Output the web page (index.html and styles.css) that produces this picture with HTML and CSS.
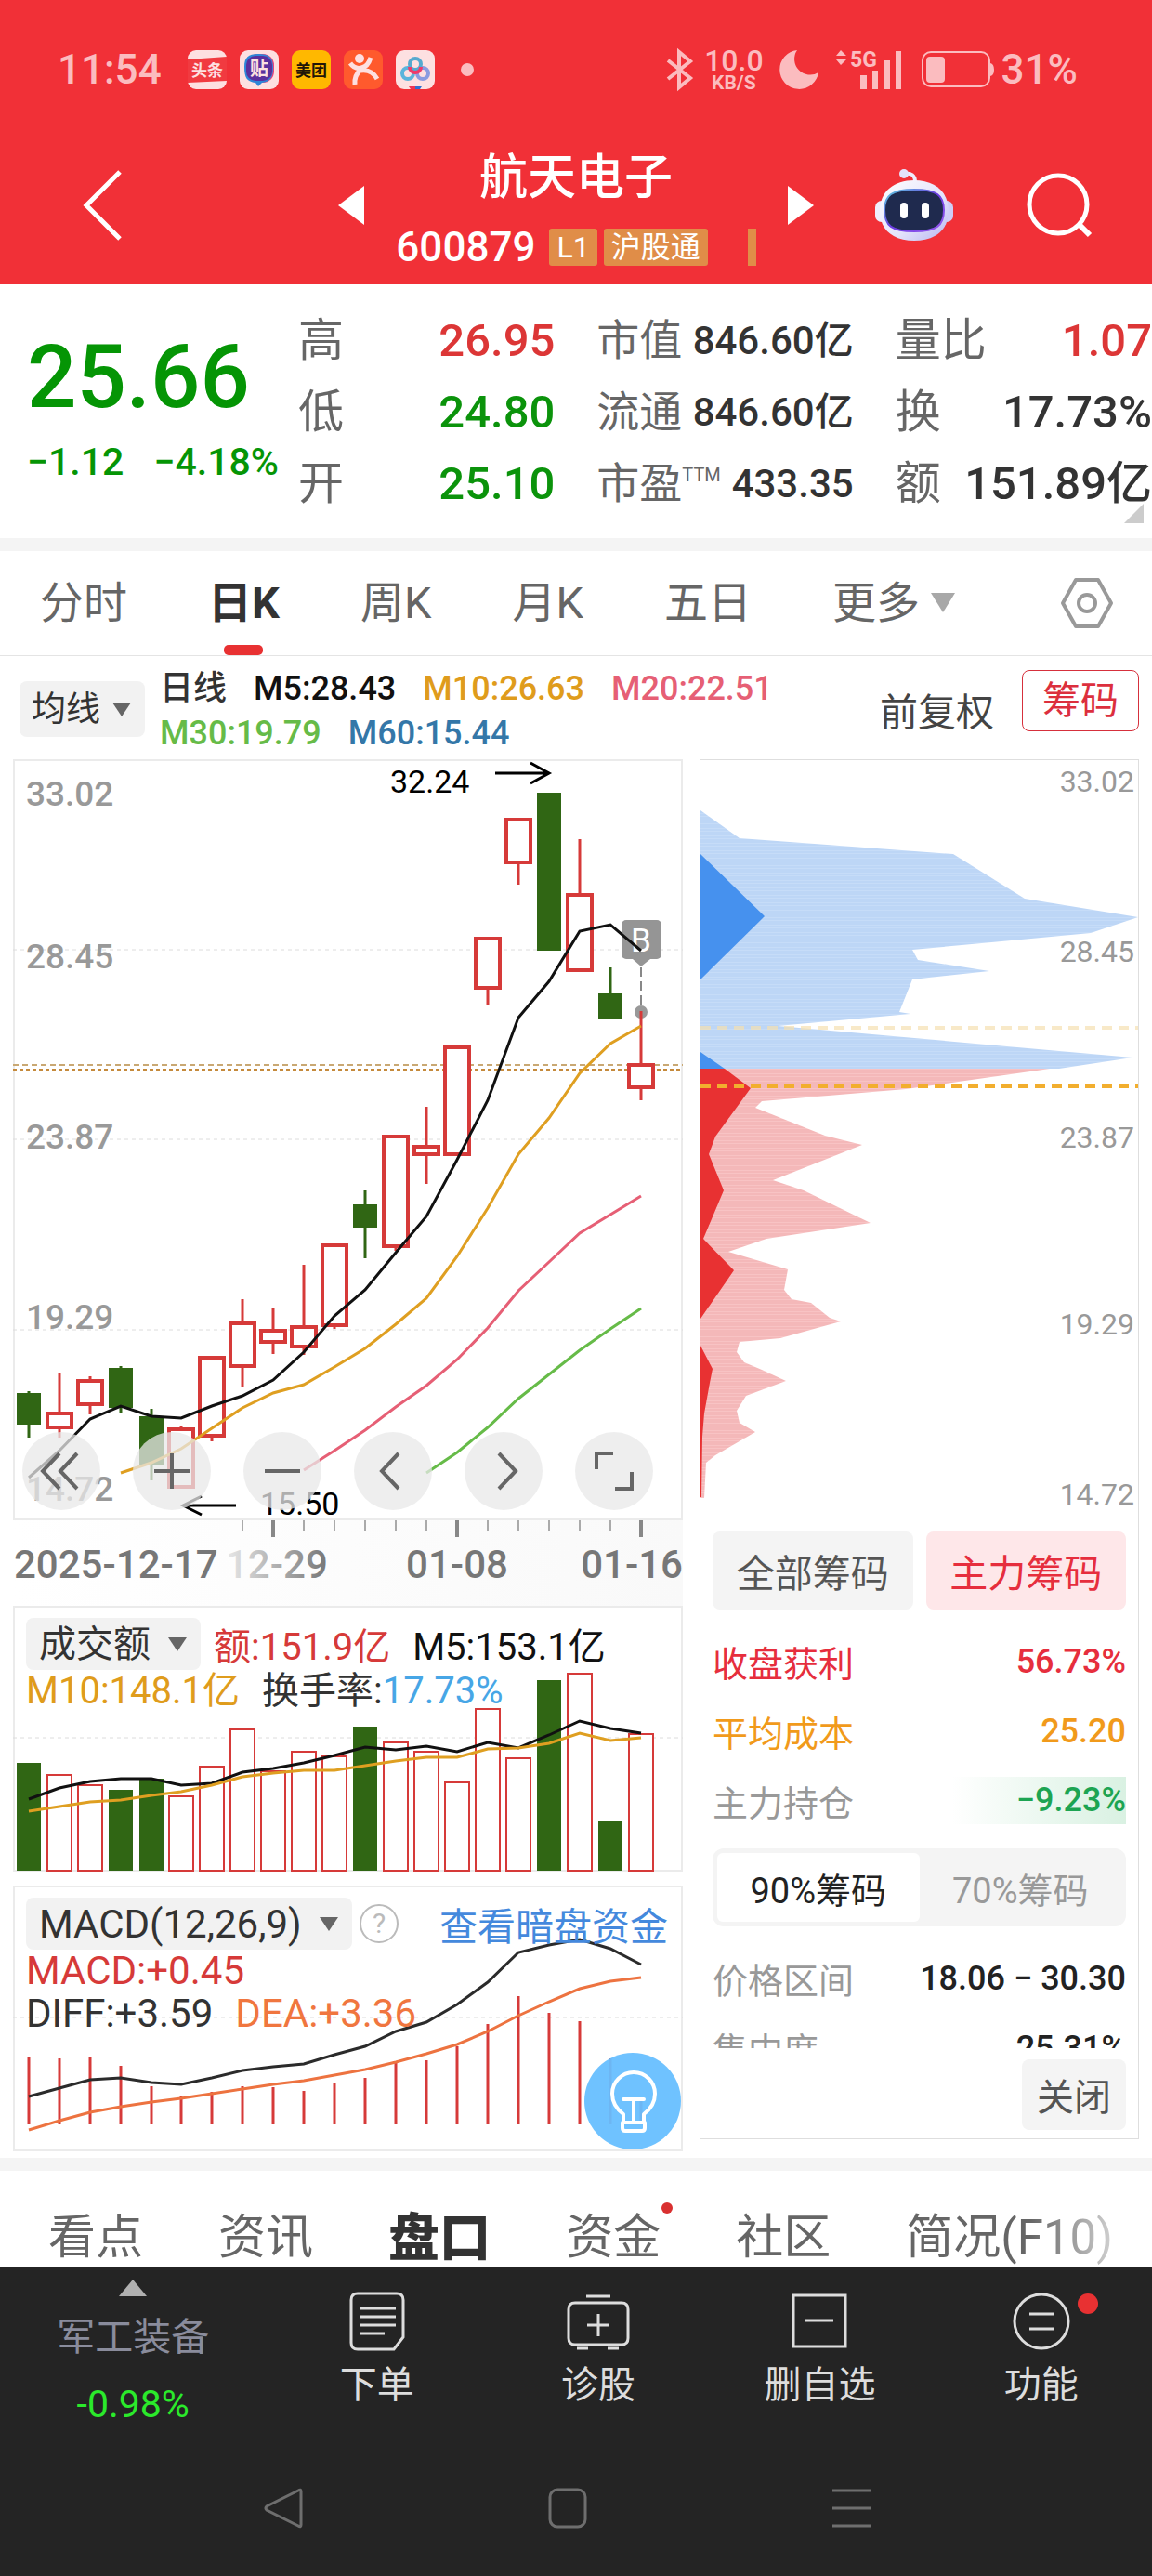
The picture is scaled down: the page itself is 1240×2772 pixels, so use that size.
FILE: index.html
```html
<!DOCTYPE html>
<html lang="zh-CN">
<head>
    <meta charset="UTF-8">
    <meta name="viewport" content="width=device-width, initial-scale=1.0">
    <title>航天电子 600879</title>
    <link rel="stylesheet" href="styles.css">
</head>
<body>
    <header class="header">
        <div class="status-bar">
            <span class="clock">11:54</span>
            <div class="app-icons">
                <svg width="42" height="42" viewBox="0 0 42 42">
                    <rect width="42" height="42" rx="9" fill="#fde0e1"/>
                    <path d="M0 10L42 7V33L0 35Z" fill="#f13a40"/>
                    <text x="21" y="28" class="app-text" font-size="17" fill="#fde0e1">头条</text>
                </svg>
                <svg width="42" height="42" viewBox="0 0 42 42">
                    <rect width="42" height="42" rx="9" fill="#fde0e1"/>
                    <rect x="7" y="4" width="30" height="31" rx="12" fill="#e9407c"/>
                    <path d="M5 18C5 8 9 4 20 4C32 4 36 8 36 19C36 30 32 34 24 35L20 39L17 35C8 34 5 30 5 18Z" fill="#2f86d8"/>
                    <rect x="7" y="6" width="28" height="27" rx="10" fill="#5b2f9d"/>
                    <text x="21" y="27" class="app-text" font-size="20" fill="#fde0e1">贴</text>
                </svg>
                <svg width="42" height="42" viewBox="0 0 42 42">
                    <rect width="42" height="42" rx="9" fill="#ffb800"/>
                    <text x="21" y="28" class="app-text" font-size="17" fill="#221608">美团</text>
                </svg>
                <svg width="42" height="42" viewBox="0 0 42 42">
                    <rect width="42" height="42" rx="9" fill="#ff5a2d"/>
                    <circle cx="17" cy="9" r="5" fill="#fde0e1"/>
                    <path d="M7 14Q12 21 19 19Q26 18 29 8M19 20Q11 27 12 37M18 22Q30 20 36 31" fill="none" stroke="#fde0e1" stroke-width="5"/>
                </svg>
                <svg width="42" height="42" viewBox="0 0 42 42">
                    <rect width="42" height="42" rx="9" fill="#fde0e1"/>
                    <circle cx="13" cy="25" r="6" fill="none" stroke="#5cb4dc" stroke-width="4"/>
                    <circle cx="29" cy="25" r="6" fill="none" stroke="#8a9be0" stroke-width="4"/>
                    <circle cx="21" cy="15" r="6" fill="none" stroke="#56a9cf" stroke-width="4"/>
                    <path d="M15 18A6 6 0 0 0 27 18" fill="none" stroke="#ef3b6a" stroke-width="4"/>
                    <path d="M14 39H21V42H16Z" fill="#ee3553"/>
                    <path d="M21 39H28L26 42H21Z" fill="#2f6fd0"/>
                </svg>
            </div>
            <span class="dot"></span>
            <div class="status-right">
                <svg width="30" height="44" viewBox="0 0 30 44">
                    <path d="M3 12L27 31L15 41V3L27 13L3 32" fill="none" stroke="#fbbcbf" stroke-width="4"/>
                </svg>
                <div class="net-speed"><b>10.0</b><span>KB/S</span></div>
                <svg width="44" height="44" viewBox="0 0 44 44">
                    <path d="M20 1A21 21 0 1 0 43 25A17 17 0 0 1 20 1Z" fill="#fbbcbf"/>
                </svg>
                <svg class="signal" width="72" height="44" viewBox="0 0 72 44">
                    <path d="M0 7L5 1L11 7ZM0 11H11L5 17Z" fill="#fbbcbf"/>
                    <text x="15" y="19" font-size="23" font-weight="700" fill="#fbbcbf">5G</text>
                    <path d="M26 28H33V43H26ZM39 23H45V43H39ZM52 12H58V43H52ZM64 2H70V43H64Z" fill="#fbbcbf"/>
                </svg>
                <svg class="battery" width="78" height="40" viewBox="0 0 78 40">
                    <rect x="1" y="1" width="72" height="37" rx="9" fill="none" stroke="#fbbcbf" stroke-width="2"/>
                    <rect x="5" y="6" width="20" height="28" rx="4" fill="#fbbcbf"/>
                    <path d="M74 13Q78 14 78 20Q78 26 74 27Z" fill="#fbbcbf"/>
                </svg>
                <span class="percent">31%</span>
            </div>
        </div>
        <div class="title-bar">
            <button class="icon-btn back" aria-label="返回">
                <svg width="44" height="76" viewBox="0 0 44 76"><path d="M40 2L4 38L40 74" fill="none" stroke="#fff" stroke-width="5"/></svg>
            </button>
            <div class="stock-switch">
                <button class="icon-btn" aria-label="上一只">
                    <svg width="28" height="42" viewBox="0 0 28 42"><path d="M28 0V42L0 21Z" fill="#fff"/></svg>
                </button>
                <div class="stock">
                    <h1>航天电子</h1>
                    <div class="stock-code">
                        <span class="code">600879</span>
                        <span class="tag">L1</span>
                        <span class="tag tag-wide">沪股通</span>
                        <span class="tag-cut"></span>
                    </div>
                </div>
                <button class="icon-btn" aria-label="下一只">
                    <svg width="28" height="42" viewBox="0 0 28 42"><path d="M0 0V42L28 21Z" fill="#fff"/></svg>
                </button>
            </div>
            <div class="title-right">
                <button class="icon-btn" aria-label="智能助手">
                    <svg width="84" height="78" viewBox="0 0 84 78">
                        <defs>
                            <linearGradient id="head" x1="0" y1="0" x2="1" y2="1">
                                <stop offset="0" stop-color="#ffffff"/>
                                <stop offset="0.6" stop-color="#e3e2fb"/>
                                <stop offset="1" stop-color="#b7b4f0"/>
                            </linearGradient>
                            <linearGradient id="rim" x1="0" y1="0" x2="1" y2="1">
                                <stop offset="0" stop-color="#5fd0e0"/>
                                <stop offset="0.5" stop-color="#6a3be0"/>
                                <stop offset="1" stop-color="#9a5cf0"/>
                            </linearGradient>
                        </defs>
                        <path d="M31 5Q43 3 43 14" fill="none" stroke="#efedfd" stroke-width="4"/>
                        <circle cx="31" cy="5" r="5" fill="#e4e2fb"/>
                        <rect x="0" y="34" width="14" height="23" rx="7" fill="#efeefd"/>
                        <rect x="70" y="34" width="14" height="23" rx="7" fill="#cfcdf6"/>
                        <path d="M42 12C64 12 79 24 79 45C79 66 64 77 42 77C20 77 5 66 5 45C5 24 20 12 42 12Z" fill="url(#head)"/>
                        <path d="M42 22C66 22 74 28 74 44C74 61 66 67 42 67C18 67 10 61 10 44C10 28 18 22 42 22Z" fill="#1f2a4e" stroke="url(#rim)" stroke-width="2"/>
                        <rect x="27" y="36" width="8" height="17" rx="4" fill="#fff"/>
                        <rect x="50" y="36" width="8" height="17" rx="4" fill="#fff"/>
                    </svg>
                </button>
                <button class="icon-btn" aria-label="搜索">
                    <svg width="70" height="70" viewBox="0 0 70 70"><circle cx="33" cy="34" r="31" fill="none" stroke="#fff" stroke-width="5"/><path d="M55 55L67 67" stroke="#fff" stroke-width="6"/></svg>
                </button>
            </div>
        </div>
    </header>

    <section class="quote">
        <div class="price">
            <div class="price-now">25.66</div>
            <div class="price-change"><span>−1.12</span><span>−4.18%</span></div>
        </div>
        <div class="stats">
            <div class="stat"><span>高</span><b class="red">26.95</b></div>
            <div class="stat small"><span>市值</span><b>846.60亿</b></div>
            <div class="stat"><span>量比</span><b class="red">1.07</b></div>
            <div class="stat"><span>低</span><b class="green">24.80</b></div>
            <div class="stat small"><span>流通</span><b>846.60亿</b></div>
            <div class="stat"><span>换</span><b>17.73%</b></div>
            <div class="stat"><span>开</span><b class="green">25.10</b></div>
            <div class="stat small"><span>市盈<sup>TTM</sup></span><b>433.35</b></div>
            <div class="stat"><span>额</span><b>151.89亿</b></div>
        </div>
        <i class="corner"></i>
    </section>

    <nav class="period-tabs">
        <a href="#">分时</a>
        <a href="#" class="active">日K</a>
        <a href="#">周K</a>
        <a href="#">月K</a>
        <a href="#">五日</a>
        <a href="#" class="more">更多</a>
        <button class="icon-btn" aria-label="设置">
            <svg width="58" height="56" viewBox="0 0 58 56"><path d="M17 3H41L55 28L41 53H17L3 28Z" fill="none" stroke="#999" stroke-width="4" stroke-linejoin="round"/><circle cx="29" cy="28" r="9" fill="none" stroke="#999" stroke-width="4"/></svg>
        </button>
    </nav>

    <div class="indicator-row">
        <span class="drop"><select class="pick" aria-label="指标"><option>均线</option></select></span>
        <div class="ma-legend">
            <div><span class="c-dark">日线</span><span class="c-black">M5:28.43</span><span class="c-gold">M10:26.63</span><span class="c-pink">M20:22.51</span></div>
            <div><span class="c-lime">M30:19.79</span><span class="c-blue">M60:15.44</span></div>
        </div>
        <span class="adjust">前复权</span>
        <button class="chip-toggle">筹码</button>
    </div>

    <main class="charts">
        <div class="left">
            <div class="kline">
                <svg id="kline" viewBox="14 816 721 819"></svg>
                <div class="tools">
                    <button aria-label="最早"><svg viewBox="0 0 84 84"><path d="M40 23L22 42L40 61M59 23L41 42L59 61"/></svg></button>
                    <button aria-label="放大"><svg viewBox="0 0 84 84"><path d="M42 23V61M23 42H61"/></svg></button>
                    <button aria-label="缩小"><svg viewBox="0 0 84 84"><path d="M23 42H61"/></svg></button>
                    <button aria-label="左移"><svg viewBox="0 0 84 84"><path d="M48 23L30 42L48 61"/></svg></button>
                    <button aria-label="右移"><svg viewBox="0 0 84 84"><path d="M37 23L55 42L37 61"/></svg></button>
                    <button aria-label="全屏"><svg viewBox="0 0 84 84"><path d="M23 40V23H41M43 61H61V43"/></svg></button>
                </div>
            </div>
            <svg id="axis" class="axis" viewBox="14 1635 721 92"></svg>

            <div class="panel">
                <svg id="volume" viewBox="14 1727 721 286"></svg>
                <div class="legend">
                    <div class="legend-top">
                        <span class="drop"><select class="pick" aria-label="副图一"><option>成交额</option></select></span>
                        <span class="c-red">额:151.9亿</span><span class="c-black second">M5:153.1亿</span>
                    </div>
                    <div class="line"><span class="c-gold">M10:148.1亿</span><span class="c-dark second">换手率:<span class="c-sky">17.73%</span></span></div>
                </div>
            </div>

            <div class="panel">
                <svg id="macd" viewBox="14 2028 721 286"></svg>
                <div class="legend macd-legend">
                    <div class="legend-top">
                        <span class="drop"><select class="pick" aria-label="副图二"><option>MACD(12,26,9)</option></select></span>
                        <button class="help" aria-label="说明">?</button>
                        <a class="fund-link" href="#">查看暗盘资金</a>
                    </div>
                    <div class="line c-red">MACD:+0.45</div>
                    <div class="line"><span class="c-dark">DIFF:+3.59</span><span class="c-orange second">DEA:+3.36</span></div>
                </div>
                <button class="bulb" aria-label="提示">
                    <svg width="104" height="104" viewBox="0 0 104 104"><g fill="none" stroke="#fff" stroke-width="4" stroke-linecap="round" stroke-linejoin="round"><path d="M42 75V66Q30 57 30 44A22 22 0 0 1 76 44Q76 57 64 66V75M42 50H64M53 50V74M41 75H65V81Q65 84 62 84H44Q41 84 41 81Z"/></g></svg>
                </button>
            </div>
        </div>

        <aside class="chips">
            <svg class="profile" viewBox="754 817 471 815">
                <defs>
                    <pattern id="blueLines" width="8" height="8" patternUnits="userSpaceOnUse"><path d="M0 0H8V8H0Z" fill="#c6dcf8"/><path d="M0 1H8M0 4H8M0 7H8" stroke="#b4d1f4"/></pattern>
                    <pattern id="redLines" width="8" height="8" patternUnits="userSpaceOnUse"><path d="M0 0H8V8H0Z" fill="#f8c3c4"/><path d="M0 1H8M0 4H8M0 7H8" stroke="#f1adaf"/></pattern>
                </defs>
                <path fill="url(#blueLines)" d="M754 871L796 901L1026 918L1103 966L1225 986L1174 1003L982 1021L988 1032L1065 1044L982 1053L968 1088L980 1090L837 1103L860 1105L1219 1137L1140 1149H754Z"/>
                <path fill="url(#redLines)" d="M754 1149H1130L975 1171L820 1184L813 1191L888 1221L928 1231L832 1269L865 1280L937 1315L825 1332L784 1346L848 1365L844 1387L852 1397L873 1401L893 1417L905 1421L840 1439L796 1443L793 1454L801 1465L820 1473L846 1485L803 1501L793 1517L796 1530L813 1540L770 1565L760 1573L758 1611H754Z"/>
                <path fill="#4691ee" d="M754 918L823 985L754 1053ZM754 1131L780 1149H754Z"/>
                <path fill="#e83132" d="M754 1149H780L808 1170L770 1222L763 1241L779 1280L757 1332L790 1366L754 1418ZM754 1447L767 1472L764 1487L758 1520L756 1545L755 1610H754Z"/>
                <path d="M754 1105H1225" stroke="#f5dfb0" stroke-opacity="0.7" stroke-width="4" stroke-dasharray="11 7"/>
                <path d="M754 1168H1225" stroke="#f2ae2e" stroke-width="4" stroke-dasharray="11 7"/>
                <g class="profile-label">
                    <text x="1221" y="851">33.02</text>
                    <text x="1221" y="1034">28.45</text>
                    <text x="1221" y="1234">23.87</text>
                    <text x="1221" y="1435">19.29</text>
                    <text x="1221" y="1618">14.72</text>
                </g>
            </svg>
            <div class="chip-info">
                <div class="chip-kind">
                    <button>全部筹码</button>
                    <button class="on">主力筹码</button>
                </div>
                <div class="rows">
                    <div class="row c-crimson"><span>收盘获利</span><b>56.73%</b></div>
                    <div class="row c-amber"><span>平均成本</span><b>25.20</b></div>
                    <div class="row"><span>主力持仓</span><b class="hold">−9.23%</b></div>
                </div>
                <div class="segment">
                    <button class="on">90%筹码</button>
                    <button>70%筹码</button>
                </div>
                <div class="rows scroll">
                    <div class="row"><span>价格区间</span><b>18.06 − 30.30</b></div>
                    <div class="row"><span>集中度</span><b>25.31%</b></div>
                </div>
                <button class="close">关闭</button>
            </div>
        </aside>
    </main>

    <nav class="info-tabs">
        <a href="#">看点</a>
        <a href="#">资讯</a>
        <a href="#" class="active">盘口</a>
        <a href="#" class="new">资金</a>
        <a href="#">社区</a>
        <a href="#" class="fade">简况(F10)</a>
    </nav>

    <footer class="footer">
        <div class="toolbar">
            <a class="sector" href="#">
                <i class="up"></i>
                <span>军工装备</span>
                <span class="pct">-0.98%</span>
            </a>
            <button>
                <svg width="68" height="66" viewBox="0 0 68 66"><path d="M13 3H55Q62 3 62 10V50L52 63H13Q6 63 6 56V10Q6 3 13 3ZM15 19H54M15 28H54M15 37H54M15 46H42"/></svg>
                <span>下单</span>
            </button>
            <button>
                <svg width="68" height="66" viewBox="0 0 68 66"><path d="M21 6H47M9 13H59Q66 13 66 20V51Q66 58 59 58H9Q2 58 2 51V20Q2 13 9 13ZM34 25V49M22 37H46M11 62H23M44 62H56"/></svg>
                <span>诊股</span>
            </button>
            <button>
                <svg width="68" height="66" viewBox="0 0 68 66"><path d="M6 5H62V60H6ZM19 32H49"/></svg>
                <span>删自选</span>
            </button>
            <button class="new">
                <svg width="68" height="66" viewBox="0 0 68 66"><circle cx="34" cy="33" r="29"/><path d="M21 25H47M21 41H47"/></svg>
                <span>功能</span>
            </button>
        </div>
        <div class="system-nav">
            <button class="icon-btn" aria-label="后退"><svg width="42" height="44" viewBox="0 0 42 44"><path d="M40 4V40Q40 43 37 41L3 24Q1 22 3 20L37 3Q40 1 40 4Z"/></svg></button>
            <button class="icon-btn" aria-label="主屏"><svg width="42" height="44" viewBox="0 0 42 44"><rect x="2" y="2" width="38" height="40" rx="8"/></svg></button>
            <button class="icon-btn" aria-label="任务"><svg width="42" height="44" viewBox="0 0 42 44"><path d="M0 3H42M0 22H42M0 41H42"/></svg></button>
        </div>
    </footer>

    <script>
        var RED = '#d63a39', GREEN = '#306614';

        function px(i) { return Math.round(30.6 + 32.98 * i); }

        // [up, body top, body bottom, high, low]
        var candles = [
            [0, 1498, 1532, 1496, 1546], [1, 1520, 1535, 1476, 1546], [1, 1485, 1510, 1480, 1521],
            [0, 1471, 1514, 1469, 1519], [0, 1523, 1575, 1515, 1592], [1, 1537, 1599, 1534, 1599],
            [1, 1460, 1544, 1460, 1550], [1, 1423, 1469, 1397, 1492], [1, 1431, 1443, 1407, 1456],
            [1, 1427, 1448, 1360, 1457], [1, 1339, 1425, 1339, 1429], [0, 1295, 1320, 1280, 1353],
            [1, 1222, 1340, 1222, 1345], [1, 1233, 1241, 1190, 1273], [1, 1126, 1241, 1126, 1241],
            [1, 1009, 1062, 1009, 1080], [1, 881, 927, 881, 951], [0, 852, 1022, 852, 1022],
            [1, 962, 1043, 902, 1043], [0, 1068, 1095, 1040, 1095], [1, 1145, 1169, 1087, 1183]
        ];
        var ma5 = [1589, 1560, 1526, 1512, 1523, 1525, 1512, 1501, 1484, 1454, 1415, 1387, 1347, 1308, 1247, 1183, 1094, 1055, 1001, 994, 1022];
        var ma10 = [1584, 1573, 1558, 1536, 1514, 1498, 1489, 1470, 1450, 1424, 1396, 1351, 1299, 1241, 1202, 1154, 1122, 1103];
        var ma20 = [1581, 1560, 1538, 1513, 1490, 1462, 1428, 1388, 1357, 1326, 1306, 1286];
        var ma30 = [1584, 1562, 1535, 1504, 1478, 1452, 1429, 1407];

        var volumes = [1896, 1909, 1920, 1925, 1913, 1932, 1900, 1860, 1905, 1884, 1889, 1857, 1874, 1884, 1917, 1838, 1891, 1807, 1800, 1959, 1865];
        var vol5 = [1935, 1923, 1916, 1913, 1913, 1920, 1918, 1906, 1902, 1896, 1888, 1879, 1882, 1878, 1884, 1874, 1880, 1866, 1851, 1859, 1864];
        var vol10 = [1948, 1943, 1938, 1936, 1931, 1927, 1920, 1911, 1907, 1904, 1904, 1899, 1894, 1890, 1890, 1881, 1880, 1875, 1864, 1872, 1869];

        var macdBars = [2213, 2214, 2212, 2222, 2244, 2254, 2250, 2244, 2245, 2249, 2240, 2235, 2218, 2216, 2201, 2177, 2147, 2165, 2174, 2214, 2260];
        var diff = [2255, 2246, 2237, 2235, 2240, 2242, 2235, 2227, 2223, 2220, 2210, 2201, 2185, 2175, 2156, 2132, 2100, 2092, 2086, 2096, 2113];
        var dea = [2291, 2281, 2272, 2266, 2261, 2257, 2252, 2247, 2242, 2238, 2232, 2226, 2218, 2209, 2199, 2185, 2168, 2153, 2139, 2131, 2127];

        // a line whose last point sits on the last candle
        function line(ys, color) {
            var start = 21 - ys.length;
            var pts = ys.map(function (y, i) { return px(start + i) + ',' + y; }).join(' ');
            return '<polyline points="' + pts + '" fill="none" stroke="' + color + '" stroke-width="3"/>';
        }

        function grid(y) {
            return '<path d="M14 ' + y + 'H735" stroke="#dcdcdc" stroke-width="1" stroke-dasharray="4 4"/>';
        }

        function frame(y, h) {
            return '<rect x="15" y="' + (y + 1) + '" width="719" height="' + (h - 2) + '" fill="none" stroke="#ebebeb" stroke-width="2"/>';
        }

        function bar(up, x, top, bottom, w) {
            var style = up ? 'fill="#fff" stroke="' + RED + '" stroke-width="' + w + '"' : 'fill="' + GREEN + '"';
            return '<rect x="' + (x - 13) + '" y="' + top + '" width="26" height="' + (bottom - top) + '" ' + style + '/>';
        }

        function drawKline() {
            var s = frame(816, 819) + grid(1021) + grid(1225) + grid(1430);
            s += '<path d="M14 1145H735" stroke="#c9a873" stroke-width="2" stroke-dasharray="6 4"/>';
            s += '<path d="M14 1150H735" stroke="#c58a3c" stroke-width="2" stroke-dasharray="4 3"/>';
            [['33.02', 866], ['28.45', 1041], ['23.87', 1235], ['19.29', 1429], ['14.72', 1614]].forEach(function (t) {
                s += '<text x="28" y="' + t[1] + '" class="price-label">' + t[0] + '</text>';
            });
            // buy marker
            s += '<rect x="669" y="989" width="43" height="42" rx="5" fill="#959595"/><path d="M681 1031H700L690 1039Z" fill="#959595"/>';
            s += '<text x="690" y="1023" class="buy">B</text>';
            s += '<path d="M690 1040V1081" stroke="#888" stroke-width="2" stroke-dasharray="10 5"/><circle cx="690" cy="1088" r="7" fill="#999"/>';
            candles.forEach(function (c, i) {
                var x = px(i);
                s += '<path d="M' + x + ' ' + c[3] + 'V' + c[4] + '" stroke="' + (c[0] ? RED : GREEN) + '" stroke-width="3"/>';
                s += bar(c[0], x, c[1], c[2], 4);
            });
            s += line(ma5, '#111') + line(ma10, '#df9f21') + line(ma20, '#e65f75') + line(ma30, '#66bb48');
            s += '<text x="420" y="852" class="mark">32.24</text><path d="M533 831H590M571 820L591 831L571 842" class="arrow"/>';
            s += '<text x="280" y="1629" class="mark">15.50</text><path d="M254 1619H197M217 1609L197 1619L217 1629" class="arrow"/>';
            document.getElementById('kline').innerHTML = s;
        }

        function drawAxis() {
            var s = '<defs><linearGradient id="dim"><stop offset="0" stop-color="#e8e8e8"/><stop offset="1" stop-color="#777"/></linearGradient>';
            s += '<linearGradient id="haze"><stop offset="0" stop-color="#fff"/><stop offset="1" stop-color="#f9f9f9"/></linearGradient></defs>';
            s += '<rect x="14" y="1635" width="721" height="92" fill="url(#haze)"/>';
            for (var i = 7; i < 21; i++) {
                var big = (i - 8) % 6 === 0;
                s += '<path d="M' + px(i) + ' 1635V' + (big ? 1653 : 1646) + '" stroke="' + (big ? '#888' : '#aaa') + '" stroke-width="' + (big ? 4 : 2) + '"/>';
            }
            s += '<text x="15" y="1697" class="date">2025-12-17</text>';
            s += '<text x="243" y="1697" class="date" style="fill:url(#dim)">12-29</text>';
            s += '<text x="492" y="1697" class="date" text-anchor="middle">01-08</text>';
            s += '<text x="735" y="1697" class="date" text-anchor="end">01-16</text>';
            document.getElementById('axis').innerHTML = s;
        }

        function drawVolume() {
            var s = frame(1727, 286) + grid(1869);
            volumes.forEach(function (y, i) { s += bar(candles[i][0], px(i), y, 2012, 2); });
            s += line(vol5, '#111') + line(vol10, '#df9f21');
            document.getElementById('volume').innerHTML = s;
        }

        function drawMacd() {
            var s = frame(2028, 286) + grid(2170);
            macdBars.forEach(function (y, i) {
                s += '<path d="M' + px(i) + ' ' + y + 'V2285" stroke="' + RED + '" stroke-width="3"/>';
            });
            s += line(diff, '#2b2b2b') + line(dea, '#ed7340');
            document.getElementById('macd').innerHTML = s;
        }

        drawKline();
        drawAxis();
        drawVolume();
        drawMacd();
    </script>
</body>
</html>
```
FILE: styles.css
```css
* {
    box-sizing: border-box;
}
body {
    margin: 0;
    background: #fff;
    color: #333;
    font-family: Roboto, "Noto Sans CJK SC", sans-serif;
    font-size: 40px;
    overflow-x: hidden;
}
a {
    color: inherit;
    text-decoration: none;
}
button, select {
    font: inherit;
    color: inherit;
    border: none;
    background: none;
    padding: 0;
    margin: 0;
    cursor: pointer;
}
svg {
    display: block;
    overflow: visible;
}
b {
    font-weight: 500;
}

/* colours */
.red { color: #dc3636; }
.green { color: #0b930b; }
.c-dark { color: #333; }
.c-black { color: #111; }
.c-gold { color: #df9c1c; }
.c-pink { color: #e65f75; }
.c-lime { color: #66bb48; }
.c-blue { color: #3477a8; }
.c-red { color: #d63a39; }
.c-sky { color: #47a6e6; }
.c-orange { color: #f0763f; }

/* header */
.header {
    background: #f13037;
    color: #fff;
    padding-top: 50px;
}
.status-bar {
    display: flex;
    align-items: center;
    height: 50px;
    padding: 0 80px 0 62px;
    color: #fbbcbf;
    font-weight: 500;
}
.clock, .percent {
    font-size: 44px;
}
.app-icons {
    display: flex;
    gap: 14px;
    margin-left: 28px;
}
.app-text {
    text-anchor: middle;
    font-weight: 700;
}
.dot {
    width: 14px;
    height: 14px;
    border-radius: 50%;
    background: #fbbcbf;
    margin-left: 28px;
}
.status-right {
    display: flex;
    align-items: center;
    margin-left: auto;
}
.net-speed {
    display: flex;
    flex-direction: column;
    align-items: center;
    margin: 0 16px 0 12px;
    font-size: 21px;
    font-weight: 700;
    line-height: 20px;
}
.net-speed b {
    font-size: 32px;
    line-height: 28px;
}
.signal {
    margin-left: 18px;
}
.battery {
    margin: 0 8px 0 20px;
}
.title-bar {
    display: grid;
    grid-template-columns: 1fr auto 1fr;
    align-items: center;
    height: 206px;
    padding-top: 36px;
}
.icon-btn {
    display: block;
}
.back {
    margin-left: 89px;
    justify-self: start;
}
.stock-switch {
    display: flex;
    align-items: center;
    gap: 34px;
}
.stock {
    padding: 18px 0 4px;
}
.stock h1 {
    margin: 0;
    font-size: 52px;
    font-weight: 500;
    line-height: 76px;
    text-align: center;
}
.stock-code {
    display: flex;
    align-items: center;
    height: 72px;
}
.code {
    font-size: 44px;
    font-weight: 500;
    margin-right: 15px;
}
.tag {
    background: #e08d48;
    height: 40px;
    line-height: 40px;
    padding: 0 8px;
    border-radius: 3px;
    font-size: 32px;
    margin-right: 7px;
}
.tag-cut {
    width: 9px;
    height: 40px;
    margin-left: 36px;
    background: #e08d48;
}
.title-right {
    display: flex;
    align-items: center;
    justify-content: flex-end;
    gap: 80px;
    padding-right: 64px;
}

/* quote */
.quote {
    position: relative;
    display: flex;
    padding: 22px 0 20px 29px;
    border-bottom: 14px solid #f4f4f4;
}
.price {
    width: 271px;
    margin-right: 21px;
    padding-top: 28px;
    color: #059505;
    font-weight: 500;
}
.price-now {
    font-size: 94px;
    line-height: 100px;
}
.price-change {
    display: flex;
    justify-content: space-between;
    font-size: 41px;
    line-height: 82px;
}
.stats {
    flex: 1;
    display: grid;
    grid-template-columns: repeat(3, 1fr);
    column-gap: 45px;
}
.stat {
    display: flex;
    justify-content: space-between;
    font-size: 49px;
    line-height: 77px;
    white-space: nowrap;
}
.stat span {
    color: #666;
}
.stat.small {
    font-size: 42px;
}
.stat.small span {
    font-size: 46px;
}
.stat sup {
    font-size: 20px;
    line-height: 0;
    vertical-align: 18px;
}
.corner {
    position: absolute;
    right: 9px;
    bottom: 16px;
    border-style: solid;
    border-width: 0 0 21px 21px;
    border-color: transparent transparent #ccc transparent;
}

/* period tabs */
.period-tabs {
    display: flex;
    gap: 87px;
    align-items: center;
    padding: 0 41px 0 43px;
    border-bottom: 1px solid #e4e4e4;
    font-size: 47px;
    line-height: 112px;
    color: #666;
    white-space: nowrap;
}
.period-tabs .icon-btn {
    margin-left: auto;
}
.period-tabs .active {
    position: relative;
    font-weight: 700;
    color: #333;
}
.period-tabs .active::after {
    content: "";
    position: absolute;
    left: 50%;
    bottom: 0;
    width: 42px;
    height: 11px;
    margin-left: -21px;
    border-radius: 5px;
    background: #e83132;
}
.more::after {
    content: "";
    display: inline-block;
    margin-left: 12px;
    vertical-align: 6px;
    border-style: solid;
    border-width: 21px 13px 0;
    border-color: #a8a8a8 transparent transparent;
}

/* indicator row */
.indicator-row {
    display: flex;
    align-items: center;
    padding: 7px 14px 4px 21px;
    font-size: 36px;
}
.drop {
    position: relative;
    display: inline-block;
}
.drop::after {
    content: "";
    position: absolute;
    right: 15px;
    top: 50%;
    margin-top: -7px;
    border-style: solid;
    border-width: 15px 10px 0;
    border-color: #666 transparent transparent;
    pointer-events: none;
}
.pick {
    appearance: none;
    display: block;
    height: 56px;
    padding: 0 54px 0 14px;
    border-radius: 8px;
    background: #f2f2f2;
    color: #333;
}
.indicator-row .pick {
    height: 60px;
    font-size: 37px;
    padding: 0 48px 0 13px;
}
.ma-legend {
    margin-left: 16px;
    font-weight: 500;
    line-height: 48px;
    white-space: nowrap;
    padding-top: 4px;
}
.ma-legend div {
    display: flex;
    gap: 29px;
}
.adjust {
    margin-left: auto;
    font-size: 41px;
    color: #444;
}
.chip-toggle {
    width: 126px;
    height: 66px;
    margin: 8px 0 0 30px;
    border: 1px solid #d6303c;
    border-radius: 8px;
    color: #dc2f3d;
    font-size: 41px;
    line-height: 60px;
    align-self: flex-start;
}

/* charts */
.charts {
    display: grid;
    grid-template-columns: 721fr 473fr;
    gap: 18px;
    align-items: start;
    padding: 0 14px 7px;
    border-bottom: 14px solid #f4f4f4;
}
.charts svg {
    width: 100%;
}
.kline, .panel {
    position: relative;
}
.price-label {
    font-size: 37px;
    font-weight: 500;
    fill: #999;
}
.mark {
    font-size: 34px;
    fill: #000;
}
.arrow {
    fill: none;
    stroke: #000;
    stroke-width: 3px;
}
.buy {
    font-size: 35px;
    fill: #fff;
    text-anchor: middle;
}
.date {
    font-size: 42px;
    font-weight: 500;
    fill: #777;
}
.tools {
    position: absolute;
    left: 10px;
    right: 32px;
    bottom: 11px;
    display: flex;
    justify-content: space-between;
}
.tools button {
    width: 84px;
    height: 84px;
    border-radius: 50%;
    background: rgba(232, 232, 232, 0.75);
}
.tools path {
    fill: none;
    stroke: #666;
    stroke-width: 4px;
}
.panel + .panel {
    margin-top: 15px;
}
.legend {
    position: absolute;
    top: 13px;
    left: 14px;
    right: 16px;
    white-space: nowrap;
    font-size: 40px;
}
.macd-legend {
    font-size: 42px;
}
.legend-top {
    display: flex;
    align-items: center;
    height: 56px;
}
.legend-top .c-red {
    margin-left: 14px;
}
.legend .line {
    line-height: 46px;
}
.second {
    margin-left: 24px;
}
.help {
    width: 42px;
    height: 42px;
    margin-left: 8px;
    border: 2px solid #bbb;
    border-radius: 50%;
    color: #bbb;
    font-size: 30px;
    line-height: 36px;
}
.fund-link {
    margin-left: auto;
    font-size: 41px;
    color: #4489dd;
}
.bulb {
    position: absolute;
    right: 2px;
    bottom: 2px;
    width: 104px;
    height: 104px;
    border-radius: 50%;
    background: rgba(102, 190, 255, 0.94);
}

/* chip distribution */
.chips {
    border: 1px solid #dedede;
}
.profile {
    border-bottom: 1px solid #dedede;
}
.profile-label text {
    font-size: 32px;
    fill: #999;
    text-anchor: end;
}
.chip-info {
    padding: 14px 13px 9px;
}
.chip-kind {
    display: flex;
    gap: 14px;
    margin-bottom: 18px;
}
.chip-kind button {
    flex: 1;
    height: 84px;
    border-radius: 8px;
    background: #f4f4f4;
    color: #555;
    font-size: 41px;
}
.chip-kind .on {
    background: #fee7e9;
    color: #e62e3d;
}
.row {
    display: flex;
    justify-content: space-between;
    align-items: center;
    height: 75px;
    font-size: 38px;
    color: #999;
}
.row b {
    font-size: 36px;
    color: #222;
}
.c-crimson, .c-crimson b {
    color: #e62e3d;
}
.c-amber, .c-amber b {
    color: #f19a1b;
}
.row .hold {
    width: 187px;
    line-height: 51px;
    text-align: right;
    color: #1ca452;
    background: linear-gradient(to right, #fff, #d9f1e2);
}
.segment {
    display: flex;
    height: 84px;
    margin: 14px 0 18px;
    padding: 5px;
    border-radius: 12px;
    background: #f4f4f4;
}
.segment button {
    flex: 1;
    border-radius: 6px;
    font-size: 38px;
    color: #999;
}
.segment .on {
    background: #fff;
    color: #222;
}
/* second row is half scrolled out */
.scroll {
    height: 113px;
    overflow: hidden;
}
.close {
    display: block;
    width: 112px;
    height: 76px;
    margin: 12px 0 0 auto;
    border-radius: 8px;
    background: #f4f4f4;
    color: #555;
    font-size: 40px;
}

/* info tabs */
.info-tabs {
    display: flex;
    justify-content: space-between;
    padding: 40px 42px 0 52px;
    font-size: 51px;
    line-height: 64px;
    color: #666;
    white-space: nowrap;
}
.info-tabs .active {
    font-size: 55px;
    font-weight: 900;
    color: #333;
}
.new {
    position: relative;
}
.info-tabs .new::after {
    content: "";
    position: absolute;
    top: -6px;
    right: -13px;
    width: 12px;
    height: 12px;
    border-radius: 50%;
    background: #d93030;
}
.fade {
    -webkit-mask-image: linear-gradient(to right, #000 60%, rgba(0, 0, 0, 0.3));
    mask-image: linear-gradient(to right, #000 60%, rgba(0, 0, 0, 0.3));
}

/* footer */
.footer {
    background: #242424;
    color: #ddd;
    padding-bottom: 56px;
}
.toolbar {
    display: grid;
    grid-template-columns: 286fr 238fr 238fr 238fr 238fr;
}
.toolbar button {
    display: flex;
    flex-direction: column;
    align-items: center;
    padding-top: 25px;
}
.toolbar span {
    line-height: 72px;
}
.toolbar svg {
    fill: none;
    stroke: #ddd;
    stroke-width: 3px;
}
.toolbar .new::after {
    content: "";
    position: absolute;
    top: 28px;
    left: 50%;
    margin-left: 39px;
    width: 22px;
    height: 22px;
    border-radius: 50%;
    background: #e83132;
}
.sector {
    display: flex;
    flex-direction: column;
    align-items: center;
    padding-top: 13px;
    font-size: 41px;
    color: #8a8c9c;
}
.sector .pct {
    color: #2bea2b;
}
.up {
    border-style: solid;
    border-width: 0 15px 18px;
    border-color: transparent transparent #b0b0b0;
    margin-bottom: 8px;
}
.system-nav {
    display: flex;
    justify-content: space-between;
    padding: 54px 302px 0 284px;
}
.system-nav svg {
    fill: none;
    stroke: #6e6e6e;
    stroke-width: 3px;
}
```
